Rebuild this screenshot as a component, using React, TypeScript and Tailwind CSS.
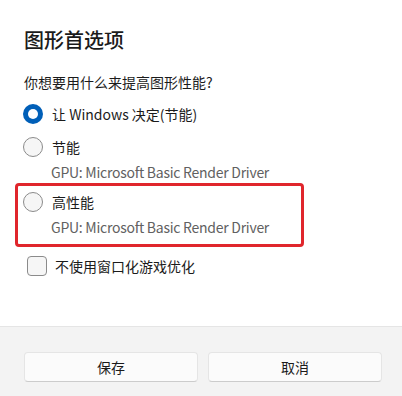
const font = {
  fontFamily: '"Noto Sans CJK SC", "Noto Sans", sans-serif',
};

function Radio({ checked }: { checked?: boolean }) {
  if (checked) {
    return (
      <span className="flex h-5 w-5 shrink-0 items-center justify-center rounded-full bg-[#005fb8]">
        <span className="h-[10px] w-[10px] rounded-full bg-white" />
      </span>
    );
  }
  return <span className="h-5 w-5 shrink-0 rounded-full border border-[#8b8b8b] bg-[#f6f6f6]" />;
}

function Option({ label, checked }: { label: string; checked?: boolean }) {
  return (
    <div className="flex h-8 items-center gap-[9px]">
      <Radio checked={checked} />
      <span className="text-[14px] leading-5 text-[#1b1b1b]">{label}</span>
    </div>
  );
}

function Desc() {
  return (
    <div className="pl-7 text-[14px] leading-[19px] tracking-[-0.26px] text-[#616161]">
      GPU: Microsoft Basic Render Driver
    </div>
  );
}

export default function App() {
  return (
    <div className="flex h-[396px] w-[402px] flex-col overflow-hidden bg-white" style={font}>
      <div className="flex flex-1 flex-col px-6 pt-[26px]">
        <h1 className="h-7 text-[20px] font-medium leading-7 text-[#1b1b1b]">图形首选项</h1>
        <p className="mt-[18px] h-5 text-[14px] leading-5 text-[#1b1b1b]">你想要用什么来提高图形性能?</p>

        <div className="-ml-[1px] mt-[6px] flex flex-col">
          <Option label="让 Windows 决定(节能)" checked />
          <div className="mt-px">
            <Option label="节能" />
            <Desc />
          </div>
          <div className="relative mt-[4px]">
            <Option label="高性能" />
            <Desc />
            <div className="absolute -left-[8px] -top-[3px] h-[64px] w-[289px] rounded-[4px] border-[3px] border-[#e0262c]" />
          </div>
        </div>

        <label className="mt-[14px] flex h-[30px] items-center gap-[8px] pl-[3px]">
          <span className="h-5 w-5 shrink-0 rounded-[4px] border border-[#8b8b8b] bg-[#f6f6f6]" />
          <span className="text-[14px] leading-5 text-[#1b1b1b]">不使用窗口化游戏优化</span>
        </label>
      </div>

      <div className="flex h-[70px] gap-[10px] border-t border-[#e5e5e5] bg-[#f3f3f3] pl-6 pr-5 pt-[25px]">
        <button className="h-[30px] flex-1 rounded-[4px] border border-[#e5e5e5] border-b-[#cccccc] bg-[#fbfbfb] text-[14px] text-[#1b1b1b]">
          保存
        </button>
        <button className="h-[30px] flex-1 rounded-[4px] border border-[#e5e5e5] border-b-[#cccccc] bg-[#fbfbfb] text-[14px] text-[#1b1b1b]">
          取消
        </button>
      </div>
    </div>
  );
}
